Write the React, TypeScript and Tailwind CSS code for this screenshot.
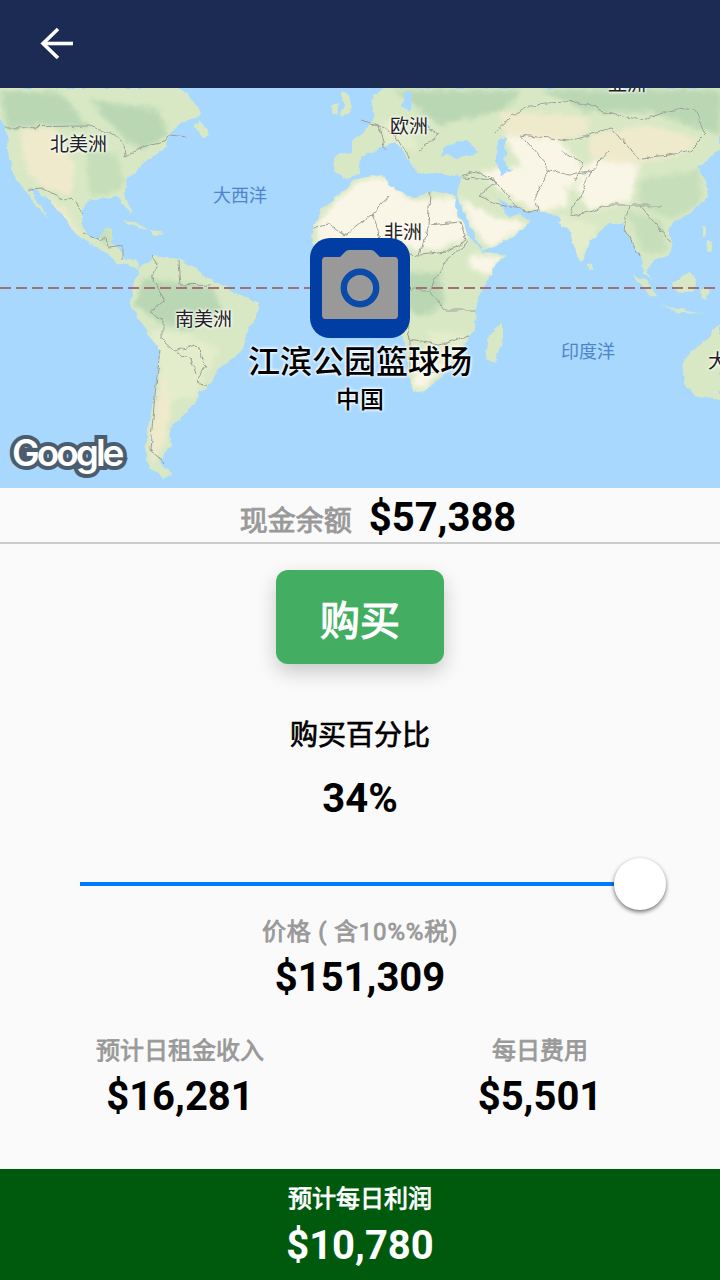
import React from 'react';

const FONT = "font-['Roboto','Noto_Sans_CJK_SC',sans-serif]";
const LAND = '#d8e8c4';
const SAND = '#faf6e7';
const TAN = '#f0eacd';
const GREEN = '#bad7b4';
const MID = '#c6dfba';
const PALE = '#e3edcb';
const SEA = '#a8d8fe';

const landShapes = [
  // north america
  '0,88 183,88 190,96 201,112 197,117 188,120 179,125 170,134 166,145 152,158 137,168 127,180 125,192 131,208 130,213 124,203 118,198 104,198 90,200 82,208 82,224 88,236 98,240 108,228 112,230 112,244 124,256 140,263 137,270 128,264 116,262 104,250 88,242 74,232 62,212 52,204 36,190 29,187 48,218 38,208 24,190 14,174 9,158 8,142 5,126 0,120',
  // south america
  '140,268 153,255 168,257 180,261 200,272 217,283 233,293 260,303 260,311 247,333 243,350 217,370 207,390 197,393 198,402 180,417 170,433 172,443 160,460 163,467 173,475 163,478 150,467 145,447 150,417 155,393 160,350 143,327 130,302 133,287',
  // africa
  '313,227 320,210 333,200 345,190 353,180 360,178 383,175 390,187 413,197 430,192 457,196 455,204 467,233 483,253 505,255 493,270 482,288 475,310 475,330 470,335 463,347 443,377 425,390 413,392 408,370 405,340 395,310 390,285 370,272 340,268 318,250 311,238',
  // eurasia
  '383,88 720,88 720,150 707,160 697,167 705,180 707,197 693,213 673,223 670,230 673,240 670,255 653,260 647,270 653,283 643,270 640,253 630,240 623,223 610,223 590,240 588,250 580,263 567,227 562,227 557,215 537,212 517,208 497,198 510,217 520,213 530,223 507,240 483,252 470,225 460,198 458,195 460,177 437,172 425,173 417,172 395,142 387,145 373,152 360,157 358,175 342,178 334,170 336,155 352,152 352,142 362,132 376,118 372,100',
  // uk, ireland
  '340,92 348,96 352,112 340,116 344,106', '332,104 338,102 338,114 332,116',
  // newfoundland, cuba, hispaniola
  '193,128 200,120 208,130 206,137 198,132', '122,221 135,222 148,230 138,228', '150,231 165,233 152,236',
  // madagascar, sri lanka
  '485,358 490,335 503,323 503,340 494,362', '588,263 592,264 592,271 588,270',
  // indonesia
  '632,273 645,280 658,297 650,295', '672,282 690,272 697,280 692,290 678,294', '660,305 680,310 703,314 680,313', '700,290 710,287 708,300 702,298',
  // australia
  '683,360 700,345 720,325 720,400 695,395 685,385',
  // philippines
  '703,227 706,227 706,236 703,236', '706,240 712,242 710,252 705,250',
];

const greenShapes = [
  '0,92 60,92 90,128 40,125 8,128', '90,100 160,110 168,135 140,150 115,130', '395,90 520,90 505,110 440,125 420,110',
  '540,90 720,90 720,135 650,112 590,112', '143,278 215,288 222,312 190,330 160,322 135,305', '402,272 440,272 445,305 420,318 405,305',
];

const midShapes = ['85,148 118,155 125,185 105,195 90,195', '640,180 700,170 700,205 672,220 640,205', '626,210 660,220 668,250 645,255', '94,225 110,228 114,245 104,245'];

const tanShapes = [
  '20,130 55,128 75,168 70,195 40,186 25,168', '500,112 590,116 585,135 530,145 505,132', '45,195 65,208 82,238 70,228',
  '165,350 178,330 186,370 170,410 165,445 152,465 150,440 158,390', '590,135 650,125 700,140 680,155 620,165 590,155',
];

const sandShapes = [
  '315,225 335,202 360,180 383,177 410,200 455,198 468,238 430,252 400,245 345,262 320,248',
  '460,198 490,215 528,224 490,248 472,225', '480,170 555,165 570,205 540,212 505,195', '505,135 560,140 585,170 570,190 520,165',
  '590,160 640,165 630,200 590,210 575,190', '420,355 445,365 425,388 412,388', '470,255 503,257 490,275 470,270',
];

const paleShapes = ['550,215 598,225 590,245 578,262', '380,120 405,125 420,150 385,148', '150,330 190,335 220,350 195,395 170,400', '430,330 468,335 450,365 425,360'];

const blueShapes = [
  '443,147 465,140 478,152 458,158 440,155', '497,140 507,138 504,160 512,170 501,176 496,160', '404,92 412,92 410,112 402,108',
];

const borders = [
  '5,127 88,126 108,131 124,143 125,157 146,146 165,142 170,135 186,137',
  '28,190 44,189 65,200 72,198 83,213', '83,233 100,240 106,236 108,248 123,246 123,258',
  '150,255 158,265 152,280 165,300 150,312 162,318 162,340 175,352 195,345 207,365 197,380 208,386',
  '160,350 155,395 150,450 165,463', '178,262 180,285 210,284', '177,352 190,360 195,375',
  '313,227 330,225 345,235 372,215 390,195', '372,215 385,252 420,255 428,225 430,192',
  '430,225 460,222 466,240 445,252 420,255', '385,252 400,290 430,290 445,262 470,240',
  '400,290 410,340 440,345 470,335', '430,290 445,310 475,310', '410,340 410,370 440,372',
  '360,120 378,125 395,135 415,120 440,135 420,150', '378,125 385,150', '395,135 410,160', '460,177 480,172 495,180 517,208',
  '462,178 498,180 478,196 500,205 538,212', '495,132 510,116 530,105 580,102 600,110 640,120 680,108 695,110 705,135 690,150 670,155 640,158 625,145 610,128 570,140 520,135',
  '520,135 550,170 570,175 590,172 610,150', '550,170 535,195 538,212', '590,172 580,195 570,215 590,212 610,205 630,205 660,205',
  '630,205 625,230 640,255', '640,205 660,230 672,240', '560,150 585,165 575,180',
];

function WorldMap() {
  const shape = (p: string) => <polygon key={p} points={p} />;
  return (
    <svg className="block h-full w-full" viewBox="0 88 720 400">
      <defs>
        <clipPath id="land-clip">{landShapes.map(shape)}</clipPath>
        <filter id="coast" x="0" y="88" width="720" height="400" filterUnits="userSpaceOnUse">
          <feTurbulence type="fractalNoise" baseFrequency="0.09" numOctaves="3" seed="4" />
          <feDisplacementMap in="SourceGraphic" scale="7" xChannelSelector="R" yChannelSelector="G" />
        </filter>
        <filter id="soft" x="0" y="88" width="720" height="400" filterUnits="userSpaceOnUse">
          <feGaussianBlur stdDeviation="2.5" />
        </filter>
      </defs>
      <rect x="0" y="88" width="720" height="400" fill={SEA} />
      <g filter="url(#coast)">
        <g fill={LAND}>{landShapes.map(shape)}</g>
        <g clipPath="url(#land-clip)">
          <g filter="url(#soft)">
            <g fill={GREEN}>{greenShapes.map(shape)}</g>
            <g fill={MID}>{midShapes.map(shape)}</g>
            <g fill={TAN}>{tanShapes.map(shape)}</g>
            <g fill={SAND}>{sandShapes.map(shape)}</g>
            <g fill={PALE}>{paleShapes.map(shape)}</g>
          </g>
        </g>
        <g fill={SEA}>{blueShapes.map(shape)}</g>
        <g fill="none" stroke="#9c9f98" strokeWidth="1">
          {borders.map((p) => <polyline key={p} points={p} />)}
        </g>
      </g>
      <line x1="0" y1="288" x2="720" y2="288" stroke="#a17078" strokeWidth="2" strokeDasharray="11 5" />
    </svg>
  );
}

function MapLabel({ text, className }: { text: string; className: string }) {
  return <span className={`absolute leading-[22px] whitespace-nowrap ${className}`}>{text}</span>;
}

const HALO = '[text-shadow:0_0_3px_#fff,0_0_3px_#fff,0_0_4px_#fff]';

function CameraIcon() {
  return (
    <svg width="76" height="71" viewBox="0 0 76 71">
      <path fill="#999999" d="M3 8h15l5-5c1-1 2-2 4-2h22c2 0 3 1 4 2l5 5h15c2 0 3 2 3 4v54c0 2-1 4-3 4H3c-2 0-3-2-3-4V12c0-2 1-4 3-4z" />
      <circle cx="38" cy="39" r="16.2" fill="none" stroke="#0a4aa8" strokeWidth="6.4" />
    </svg>
  );
}

function Stat({ label, value }: { label: string; value: string }) {
  return (
    <div className="flex w-[360px] flex-col items-center">
      <span className="text-[24px] leading-[30px] font-normal text-[#999999] [-webkit-text-stroke:0.8px_#999999]">{label}</span>
      <span className="mt-[8px] text-[40px] leading-[46px] font-bold text-black">{value}</span>
    </div>
  );
}

export default function App() {
  return (
    <div className={`flex h-[1280px] w-[720px] flex-col overflow-hidden bg-[#fafafa] ${FONT}`}>
      <header className="flex h-[88px] items-center bg-[#1c2b54] pl-[40px]">
        <svg width="34" height="34" viewBox="0 0 34 34" fill="none" stroke="#ffffff" strokeWidth="3.6">
          <path d="M33 16.5H4" />
          <path d="M18 2L3 16.5 18 31" />
        </svg>
      </header>

      <div className="relative h-[400px] overflow-hidden">
        <WorldMap />
        <MapLabel text="北美洲" className={`top-[46px] left-[50px] text-[19px] text-[#222222] ${HALO}`} />
        <MapLabel text="大西洋" className="top-[97px] left-[213px] text-[18px] text-[#4f83cc]" />
        <MapLabel text="欧洲" className={`top-[28px] left-[390px] text-[19px] text-[#222222] ${HALO}`} />
        <MapLabel text="亚洲" className={`top-[-14px] left-[608px] text-[19px] text-[#222222] ${HALO}`} />
        <MapLabel text="非洲" className={`top-[134px] left-[384px] text-[19px] text-[#222222] ${HALO}`} />
        <MapLabel text="南美洲" className={`top-[221px] left-[175px] text-[19px] text-[#222222] ${HALO}`} />
        <MapLabel text="印度洋" className="top-[253px] left-[561px] text-[18px] text-[#4f83cc]" />
        <MapLabel text="大" className={`top-[263px] left-[708px] text-[19px] text-[#222222] ${HALO}`} />

        <div className="absolute top-[150px] left-0 flex w-full flex-col items-center">
          <div className="flex h-[100px] w-[100px] items-center justify-center rounded-[20px] bg-[#003ea3] pb-[8px]">
            <CameraIcon />
          </div>
          <span className={`mt-[4px] text-[32px] leading-[40px] font-medium whitespace-nowrap text-black ${HALO}`}>江滨公园篮球场</span>
          <span className={`mt-[2px] text-[24px] leading-[32px] font-medium whitespace-nowrap text-black ${HALO}`}>中国</span>
        </div>

        <span className="absolute top-[340px] left-[12px] font-['Inter',sans-serif] text-[37px] leading-[50px] font-semibold tracking-[-3px] text-white [-webkit-text-stroke:8px_#4b5d6d] [paint-order:stroke]">
          Google
        </span>
      </div>

      <div className="flex h-[56px] items-center justify-center gap-[17px] border-b-2 border-[#cccccc] pt-[6px] pl-[36px]">
        <span className="mt-[8px] text-[28px] leading-[36px] font-normal text-[#999999] [-webkit-text-stroke:0.9px_#999999]">现金余额</span>
        <span className="text-[40px] leading-[46px] font-bold text-black">$57,388</span>
      </div>

      <div className="mt-[26px] flex justify-center">
        <button className="flex h-[94px] w-[168px] items-center justify-center rounded-[12px] bg-[#43ae62] pt-[10px] text-[40px] font-normal text-white shadow-[0_8px_20px_rgba(0,0,0,0.2)] [-webkit-text-stroke:1.2px_#ffffff]">
          购买
        </button>
      </div>

      <div className="mt-[52px] text-center text-[28px] leading-[40px] font-normal text-black [-webkit-text-stroke:0.7px_#000000]">购买百分比</div>
      <div className="mt-[20px] text-center text-[40px] leading-[46px] font-bold text-black">34%</div>

      <div className="mt-[36px] flex h-[52px] items-center pl-[80px]">
        <div className="h-[4px] w-[534px] bg-[#007aff]" />
        <div className="h-[52px] w-[52px] shrink-0 rounded-full bg-white shadow-[0_2px_4px_rgba(0,0,0,0.55)]" />
      </div>

      <div className="mt-[7px] text-center text-[24px] leading-[30px] font-normal tracking-[0.8px] text-[#999999] [-webkit-text-stroke:0.8px_#999999]">价格 ( 含10%%税)</div>
      <div className="mt-[8px] text-center text-[40px] leading-[46px] font-bold text-black">$151,309</div>

      <div className="mt-[35px] flex">
        <Stat label="预计日租金收入" value="$16,281" />
        <Stat label="每日费用" value="$5,501" />
      </div>

      <footer className="mt-auto flex h-[111px] flex-col items-center bg-[#005a0e] pt-[15px] text-white">
        <span className="text-[24px] leading-[30px] font-normal [-webkit-text-stroke:0.8px_#ffffff]">预计每日利润</span>
        <span className="mt-[9px] text-[40px] leading-[46px] font-bold">$10,780</span>
      </footer>
    </div>
  );
}
